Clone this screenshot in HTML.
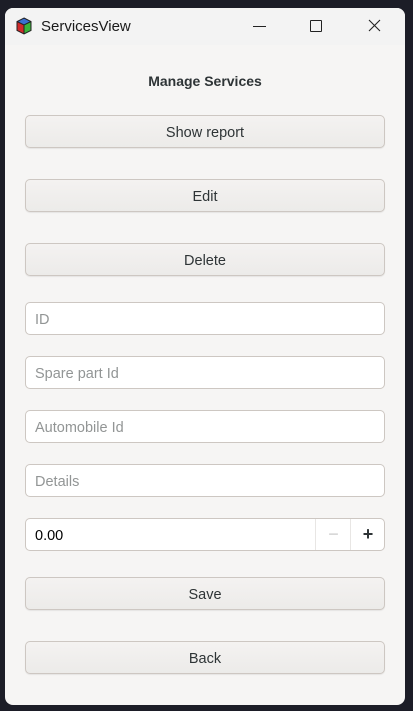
<!DOCTYPE html><html><head><style>
body{margin:0;width:413px;height:711px;background:#1c1d27;font-family:"Liberation Sans",sans-serif;position:relative;overflow:hidden}
.win{position:absolute;left:5px;top:8px;width:400px;height:697px;background:#f6f5f4;border-radius:8px;overflow:hidden}
.tb{position:absolute;left:0;top:0;width:400px;height:37px;background:#f3f3f3}
.t{position:absolute;left:36px;top:10px;font-size:15px;color:#1a1a1a}
.h{position:absolute;top:65px;width:100%;text-align:center;font-weight:bold;font-size:14px;color:#2e3436}
.b{position:absolute;left:20px;width:358px;height:29px;padding-top:2px;border:1px solid #cdc7c2;border-radius:5px;background:linear-gradient(#f4f2f1,#ecebe9);font-size:14.5px;color:#2e3436;text-align:center;line-height:31px;box-shadow:0 1px 1px rgba(0,0,0,.07)}
.e{position:absolute;left:20px;width:349px;height:29px;padding-top:2px;border:1px solid #cdc7c2;border-radius:5px;background:#fff;font-size:14.5px;color:#929595;line-height:31px;padding-left:9px}
</style></head><body>
<div class="win">
<div class="tb">
<svg style="position:absolute;left:11px;top:9px" width="16" height="18" viewBox="0 0 16 18"><polygon points="8,1 15,4.5 8,8 1,4.5" fill="#3a6fd0"/><polygon points="1,4.5 8,8 8,17 1,13.5" fill="#d02a2a"/><polygon points="15,4.5 8,8 8,17 15,13.5" fill="#3bb33b"/><path d="M8,1 15,4.5 15,13.5 8,17 1,13.5 1,4.5Z M8,8V17M1,4.5 8,8 15,4.5" fill="none" stroke="#222" stroke-width="1"/></svg>
<div class="t">ServicesView</div>
<div style="position:absolute;left:248px;top:18px;width:13px;height:1px;background:#222"></div>
<div style="position:absolute;left:305px;top:12px;width:10px;height:10px;border:1px solid #222;border-radius:1px"></div>
<svg style="position:absolute;left:363px;top:11px" width="13" height="13"><path d="M1,1 12,12 M12,1 1,12" stroke="#222" stroke-width="1.1"/></svg>
</div>
<div class="h">Manage Services</div>
<div class="b" style="top:107px">Show report</div>
<div class="b" style="top:171px">Edit</div>
<div class="b" style="top:235px">Delete</div>
<div class="e" style="top:294px">ID</div>
<div class="e" style="top:348px">Spare part Id</div>
<div class="e" style="top:402px">Automobile Id</div>
<div class="e" style="top:456px">Details</div>
<div class="e" style="top:510px;color:#000">0.00
<div style="position:absolute;left:289px;top:0;width:35px;height:31px;border-left:1px solid #e8e6e4;text-align:center;color:#ccc;font-size:18px">−</div>
<div style="position:absolute;left:324px;top:0;width:34px;height:31px;border-left:1px solid #e8e6e4;text-align:center;color:#2e3436;font-size:18px;font-weight:bold">+</div>
</div>
<div class="b" style="top:569px">Save</div>
<div class="b" style="top:633px">Back</div>
</div>
</body></html>
